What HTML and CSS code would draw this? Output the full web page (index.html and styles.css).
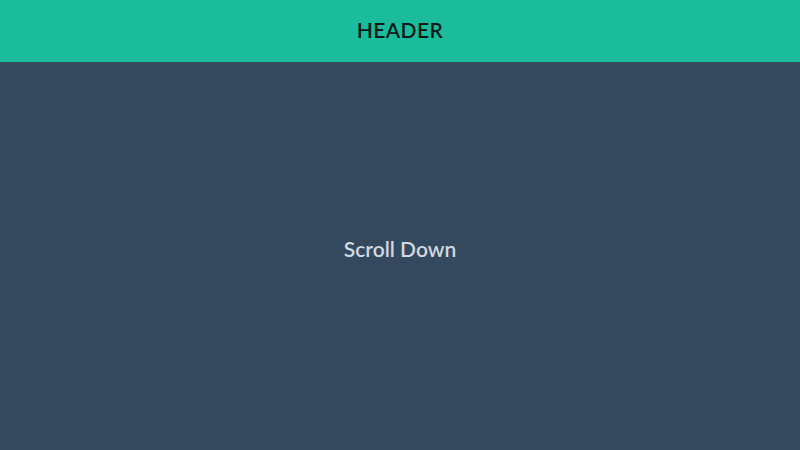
FILE: index.html
```html
<!DOCTYPE html>
<html lang="en">
<head>
<meta charset="utf-8">
<title>Scroll</title>
<link rel="stylesheet" href="styles.css">
</head>
<body>
  <header class="site-header">
    <h1 class="site-title">HEADER</h1>
  </header>
  <main class="content">
    <p class="hint">Scroll Down</p>
  </main>
</body>
</html>
```
FILE: styles.css
```css
html, body {
  margin: 0;
  padding: 0;
  height: 100%;
}

body {
  display: flex;
  flex-direction: column;
  background: #34495e;
  font-family: Lato, "Open Sans", sans-serif;
}

.site-header {
  height: 62px;
  flex: 0 0 62px;
  background: #1abc9c;
  display: flex;
  align-items: center;
  justify-content: center;
  padding-bottom: 3px;
  box-sizing: border-box;
}

.site-title {
  margin: 0;
  font-size: 21px;
  font-weight: 600;
  color: #0d1a17;
  letter-spacing: 0.4px;
}

.content {
  flex: 1;
  display: flex;
  align-items: center;
  justify-content: center;
  padding-bottom: 16px;
}

.hint {
  margin: 0;
  font-size: 21px;
  font-weight: 600;
  color: #cfd8e1;
}
```
